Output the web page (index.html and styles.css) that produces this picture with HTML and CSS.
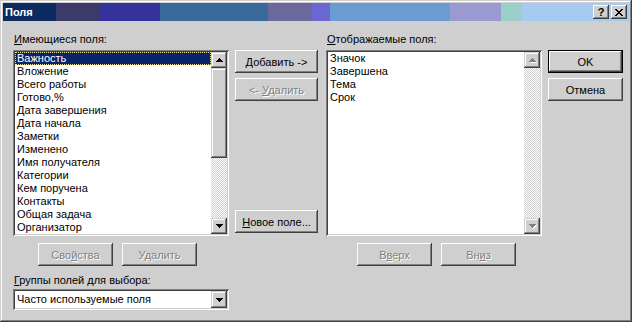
FILE: index.html
```html
<!DOCTYPE html>
<html lang="ru">
<head>
  <meta charset="UTF-8" />
  <title>Поля</title>
  <link rel="stylesheet" href="styles.css">
</head>
<body>

<div class="window">
  <div class="titlebar">
    <span class="title">Поля</span>
    <div class="caption-buttons">
      <span class="cap-btn help">?</span>
      <span class="cap-btn close">
        <svg width="8" height="7" viewBox="0 0 8 7" shape-rendering="crispEdges">
          <path d="M0 0h2v1H0zM6 0h2v1H6zM1 1h2v1H1zM5 1h2v1H5zM2 2h4v1H2zM3 3h2v1H3zM2 4h4v1H2zM1 5h2v1H1zM5 5h2v1H5zM0 6h2v1H0zM6 6h2v1H6z"/>
        </svg>
      </span>
    </div>
  </div>

  <div class="content">
    <div class="col col-left">
      <div class="label"><u>И</u>меющиеся поля:</div>
      <div class="listbox">
        <ul class="items">
          <li class="selected">Важность</li>
          <li>Вложение</li>
          <li>Всего работы</li>
          <li>Готово,%</li>
          <li>Дата завершения</li>
          <li>Дата начала</li>
          <li>Заметки</li>
          <li>Изменено</li>
          <li>Имя получателя</li>
          <li>Категории</li>
          <li>Кем поручена</li>
          <li>Контакты</li>
          <li>Общая задача</li>
          <li>Организатор</li>
        </ul>
        <div class="scrollbar">
          <span class="sb-btn">
            <svg width="7" height="4" viewBox="0 0 7 4" shape-rendering="crispEdges"><path d="M3 0h1v1h1v1h1v1h1v1H0V3h1V2h1V1h1z"/></svg>
          </span>
          <span class="sb-thumb"></span>
          <span class="sb-track"></span>
          <span class="sb-btn">
            <svg width="7" height="4" viewBox="0 0 7 4" shape-rendering="crispEdges"><path d="M0 0h7v1H6v1H5v1H4v1H3V3H2V2H1V1H0z"/></svg>
          </span>
        </div>
      </div>
      <div class="btn-row left-row">
        <button class="btn disabled"><span>Сво<u>й</u>ства</span></button>
        <button class="btn disabled"><span>У<u>д</u>алить</span></button>
      </div>
      <div class="label group-label"><u>Г</u>руппы полей для выбора:</div>
      <div class="combo">
        <span class="combo-text">Часто используемые поля</span>
        <span class="sb-btn combo-btn">
          <svg width="7" height="4" viewBox="0 0 7 4" shape-rendering="crispEdges"><path d="M0 0h7v1H6v1H5v1H4v1H3V3H2V2H1V1H0z"/></svg>
        </span>
      </div>
    </div>

    <div class="col col-mid">
      <button class="btn wide"><span><u>Д</u>обавить -&gt;</span></button>
      <button class="btn wide disabled second"><span>&lt;- <u>У</u>далить</span></button>
      <button class="btn wide new-field"><span><u>Н</u>овое поле...</span></button>
    </div>

    <div class="col col-right">
      <div class="label"><u>О</u>тображаемые поля:</div>
      <div class="listbox">
        <ul class="items">
          <li>Значок</li>
          <li>Завершена</li>
          <li>Тема</li>
          <li>Срок</li>
        </ul>
        <div class="scrollbar">
          <span class="sb-btn off">
            <svg width="8" height="5" viewBox="0 0 8 5" shape-rendering="crispEdges"><path fill="#fff" d="M4 1h1v1h1v1h1v1h1v1H1V4h1V3h1V2h1z"/><path fill="#808080" d="M3 0h1v1h1v1h1v1h1v1H0V3h1V2h1V1h1z"/></svg>
          </span>
          <span class="sb-track"></span>
          <span class="sb-btn off">
            <svg width="8" height="5" viewBox="0 0 8 5" shape-rendering="crispEdges"><path fill="#fff" d="M1 1h7v1H7v1H6v1H5v1H4V4H3V3H2V2H1z"/><path fill="#808080" d="M0 0h7v1H6v1H5v1H4v1H3V3H2V2H1V1H0z"/></svg>
          </span>
        </div>
      </div>
      <div class="btn-row right-row">
        <button class="btn disabled"><span>В<u>в</u>ерх</span></button>
        <button class="btn disabled"><span>Вн<u>и</u>з</span></button>
      </div>
    </div>

    <div class="col col-ok">
      <button class="btn default"><span>OK</span></button>
      <button class="btn second"><span>Отмена</span></button>
    </div>
  </div>
</div>

</body>
</html>
```

FILE: styles.css
```css
body {
  margin: 0;
  font-family: "Liberation Sans", Arial, sans-serif;
  font-size: 11px;
  color: #000;
  background: #cfcfcf;
}

.window {
  width: 632px;
  height: 322px;
  box-sizing: border-box;
  padding: 3px;
  background: #cfcfcf;
  box-shadow: inset -1px -1px #404040, inset 1px 1px #cfcfcf,
              inset -2px -2px #808080, inset 2px 2px #fff;
}

.titlebar {
  height: 18px;
  display: flex;
  align-items: center;
  justify-content: space-between;
  background: linear-gradient(to right,
    #0b2a5f 0 53px, #3b3a6b 53px 97px, #35339b 97px 157px,
    #3a699b 157px 265px, #6b699c 265px 309px, #6a66d2 309px 327px,
    #6a9bd2 327px 447px, #9a9ad0 447px 498px, #9bcfca 498px 519px,
    #a6caf0 519px);
}

.title {
  color: #fff;
  font-weight: bold;
  padding-left: 2px;
}

.caption-buttons {
  display: flex;
  gap: 2px;
  margin-right: 2px;
}

.cap-btn {
  width: 16px;
  height: 14px;
  box-sizing: border-box;
  background: #cfcfcf;
  display: flex;
  align-items: center;
  justify-content: center;
  box-shadow: inset -1px -1px #404040, inset 1px 1px #fff,
              inset -2px -2px #808080, inset 2px 2px #cfcfcf;
}

.cap-btn.help {
  font-weight: bold;
  font-size: 11px;
  line-height: 14px;
}

.content {
  display: flex;
  padding: 12px 0 0 10px;
}

.col {
  display: flex;
  flex-direction: column;
}

.col-left, .col-right {
  width: 216px;
}

.col-mid {
  margin-left: 6px;
  width: 83px;
  padding-top: 17px;
}

.col-right {
  margin-left: 8px;
}

.col-ok {
  margin-left: 6px;
  padding-top: 17px;
}

.label {
  height: 13px;
  line-height: 13px;
  padding-left: 1px;
  white-space: nowrap;
}

.listbox {
  margin-top: 4px;
  width: 216px;
  height: 186px;
  box-sizing: border-box;
  padding: 2px;
  background: #fff;
  display: flex;
  box-shadow: inset 1px 1px #808080, inset -1px -1px #fff,
              inset 2px 2px #404040, inset -2px -2px #cfcfcf;
}

.items {
  flex: 1;
  list-style: none;
  margin: 0;
  padding: 0;
  overflow: hidden;
}

.items li {
  height: 13px;
  line-height: 13px;
  padding-left: 2px;
  white-space: nowrap;
}

.items li.selected {
  background: #0a246a;
  color: #fff;
  outline: 1px dotted #e8e4a0;
  outline-offset: -1px;
}

.scrollbar {
  width: 16px;
  display: flex;
  flex-direction: column;
}

.sb-btn {
  width: 16px;
  height: 16px;
  flex: none;
  box-sizing: border-box;
  background: #cfcfcf;
  display: flex;
  align-items: center;
  justify-content: center;
  box-shadow: inset -1px -1px #404040, inset 1px 1px #cfcfcf,
              inset -2px -2px #808080, inset 2px 2px #fff;
}

.sb-btn.off svg {
  margin: 1px 0 0 1px;
}

.sb-thumb {
  height: 90px;
  flex: none;
  background: #cfcfcf;
  box-shadow: inset -1px -1px #404040, inset 1px 1px #cfcfcf,
              inset -2px -2px #808080, inset 2px 2px #fff;
}

.sb-track {
  flex: 1;
  background: repeating-conic-gradient(#fff 0 25%, #cfcfcf 0 50%) 0 0 / 2px 2px;
}

.btn {
  box-sizing: border-box;
  width: 75px;
  height: 23px;
  padding: 0;
  border: 0;
  font: inherit;
  font-weight: normal;
  color: #000;
  background: #cfcfcf;
  display: flex;
  align-items: center;
  justify-content: center;
  white-space: pre;
  box-shadow: inset -1px -1px #404040, inset 1px 1px #fff,
              inset -2px -2px #808080, inset 2px 2px #cfcfcf;
}

.btn.wide {
  width: 83px;
}

.btn.second {
  margin-top: 5px;
}

.btn.new-field {
  margin-top: 109px;
}

.btn.default {
  box-shadow: inset 0 0 0 1px #000, inset -2px -2px #404040,
              inset 2px 2px #fff, inset -3px -3px #808080;
}

.btn.disabled {
  color: #808080;
  text-shadow: 1px 1px #fff;
}

.btn-row {
  display: flex;
  margin-top: 7px;
}

.left-row {
  padding-left: 25px;
  gap: 9px;
}

.right-row {
  padding-left: 31px;
  gap: 9px;
}

.group-label {
  margin-top: 8px;
}

.combo {
  margin-top: 2px;
  width: 216px;
  height: 21px;
  box-sizing: border-box;
  padding: 2px;
  background: #fff;
  display: flex;
  box-shadow: inset 1px 1px #808080, inset -1px -1px #fff,
              inset 2px 2px #404040, inset -2px -2px #cfcfcf;
}

.combo-text {
  flex: 1;
  line-height: 17px;
  padding-left: 2px;
}

.combo-btn {
  height: 17px;
}
```
